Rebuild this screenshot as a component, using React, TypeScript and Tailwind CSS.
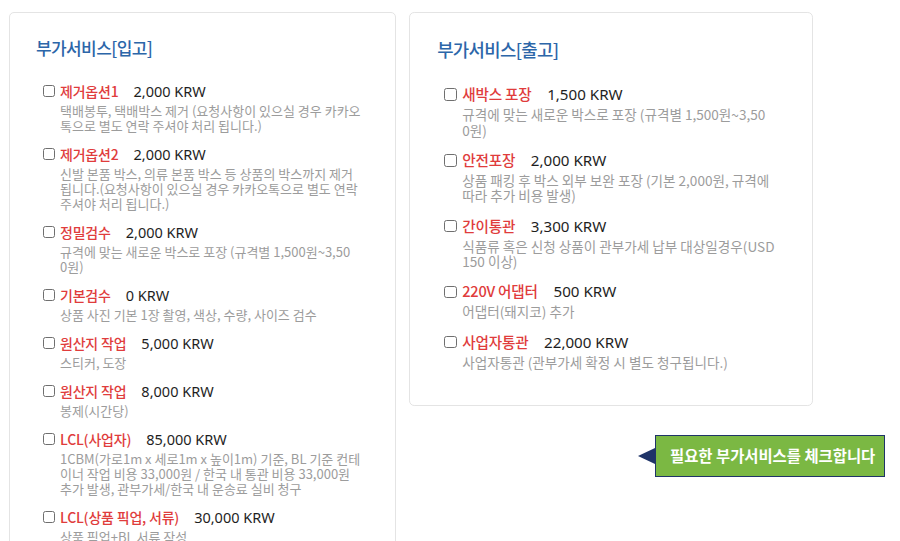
import React from "react";

type Item = { name: string; price: string; desc: string[] };

const inbound: Item[] = [
  {
    name: "제거옵션1",
    price: "2,000 KRW",
    desc: ["택배봉투, 택배박스 제거 (요청사항이 있으실 경우 카카오", "톡으로 별도 연락 주셔야 처리 됩니다.)"],
  },
  {
    name: "제거옵션2",
    price: "2,000 KRW",
    desc: [
      "신발 본품 박스, 의류 본품 박스 등 상품의 박스까지 제거",
      "됩니다.(요청사항이 있으실 경우 카카오톡으로 별도 연락",
      "주셔야 처리 됩니다.)",
    ],
  },
  {
    name: "정밀검수",
    price: "2,000 KRW",
    desc: ["규격에 맞는 새로운 박스로 포장 (규격별 1,500원~3,50", "0원)"],
  },
  { name: "기본검수", price: "0 KRW", desc: ["상품 사진 기본 1장 촬영, 색상, 수량, 사이즈 검수"] },
  { name: "원산지 작업", price: "5,000 KRW", desc: ["스티커, 도장"] },
  { name: "원산지 작업", price: "8,000 KRW", desc: ["봉제(시간당)"] },
  {
    name: "LCL(사업자)",
    price: "85,000 KRW",
    desc: [
      "1CBM(가로1m x 세로1m x 높이1m) 기준, BL 기준 컨테",
      "이너 작업 비용 33,000원 / 한국 내 통관 비용 33,000원",
      "추가 발생, 관부가세/한국 내 운송료 실비 청구",
    ],
  },
  { name: "LCL(상품 픽업, 서류)", price: "30,000 KRW", desc: ["상품 픽업+BL 서류 작성"] },
];

const outbound: Item[] = [
  {
    name: "새박스 포장",
    price: "1,500 KRW",
    desc: ["규격에 맞는 새로운 박스로 포장 (규격별 1,500원~3,50", "0원)"],
  },
  {
    name: "안전포장",
    price: "2,000 KRW",
    desc: ["상품 패킹 후 박스 외부 보완 포장 (기본 2,000원, 규격에", "따라 추가 비용 발생)"],
  },
  {
    name: "간이통관",
    price: "3,300 KRW",
    desc: ["식품류 혹은 신청 상품이 관부가세 납부 대상일경우(USD", "150 이상)"],
  },
  { name: "220V 어댑터", price: "500 KRW", desc: ["어댑터(돼지코) 추가"] },
  { name: "사업자통관", price: "22,000 KRW", desc: ["사업자통관 (관부가세 확정 시 별도 청구됩니다.)"] },
];

const KR = "font-['Noto_Sans_CJK_KR',sans-serif]";

function Row({ item }: { item: Item }) {
  return (
    <div className="flex flex-col">
      <div className="flex h-[22px] items-center">
        <input
          type="checkbox"
          className="m-0 ml-[7px] h-[12px] w-[12px] shrink-0 appearance-none rounded-[2.5px] border border-[#6f6f6f] bg-white"
        />
        <span className={`ml-[5px] text-[14px] font-medium leading-[22px] tracking-[-0.2px] text-[#e03c3c] ${KR}`}>
          {item.name}
        </span>
        <span className="ml-[15px] font-['Noto_Sans','Noto_Sans_CJK_KR',sans-serif] text-[14.5px] leading-[22px] text-[#1e1e1e]">
          {item.price}
        </span>
      </div>
      <div className={`mt-[1px] pl-[24px] text-[13px] leading-[15px] text-[#9c9c9c] ${KR}`}>
        {item.desc.map((line, i) => (
          <div key={i} className="whitespace-nowrap">
            {line}
          </div>
        ))}
      </div>
    </div>
  );
}

function Panel({ title, items, extra }: { title: string; items: Item[]; extra: string }) {
  return (
    <div className={`w-[387px] rounded-[5px] border border-[#e4e4e4] bg-white pl-[26px] pr-[20px] pt-[23px] ${extra}`}>
      <div className={`text-[17px] font-medium leading-[24px] tracking-[-0.6px] text-[#2c66a9] ${KR}`}>{title}</div>
      <div className="mt-[20px] flex flex-col gap-[10px]">
        {items.map((it, i) => (
          <Row key={i} item={it} />
        ))}
      </div>
    </div>
  );
}

export default function App() {
  return (
    <div className="flex h-[541px] w-[900px] items-start gap-[13px] overflow-hidden bg-white pl-[9px] pt-[12px]">
      <Panel title="부가서비스[입고]" items={inbound} extra="pb-[40px]" />
      <div className="flex flex-col">
        <div className="[zoom:1.045]">
          <Panel title="부가서비스[출고]" items={outbound} extra="pb-[33px]" />
        </div>
        <div className="ml-[229px] mt-[29px] flex items-center">
          <div className="h-0 w-0 border-y-[8.5px] border-r-[17px] border-y-transparent border-r-[#1f3468]" />
          <div className="flex h-[42px] w-[230px] items-center border-[1.5px] border-[#1f3468] bg-[#7bb843] pl-[14px]">
            <span className={`text-[15.4px] font-bold text-white ${KR}`}>필요한 부가서비스를 체크합니다</span>
          </div>
        </div>
      </div>
    </div>
  );
}
